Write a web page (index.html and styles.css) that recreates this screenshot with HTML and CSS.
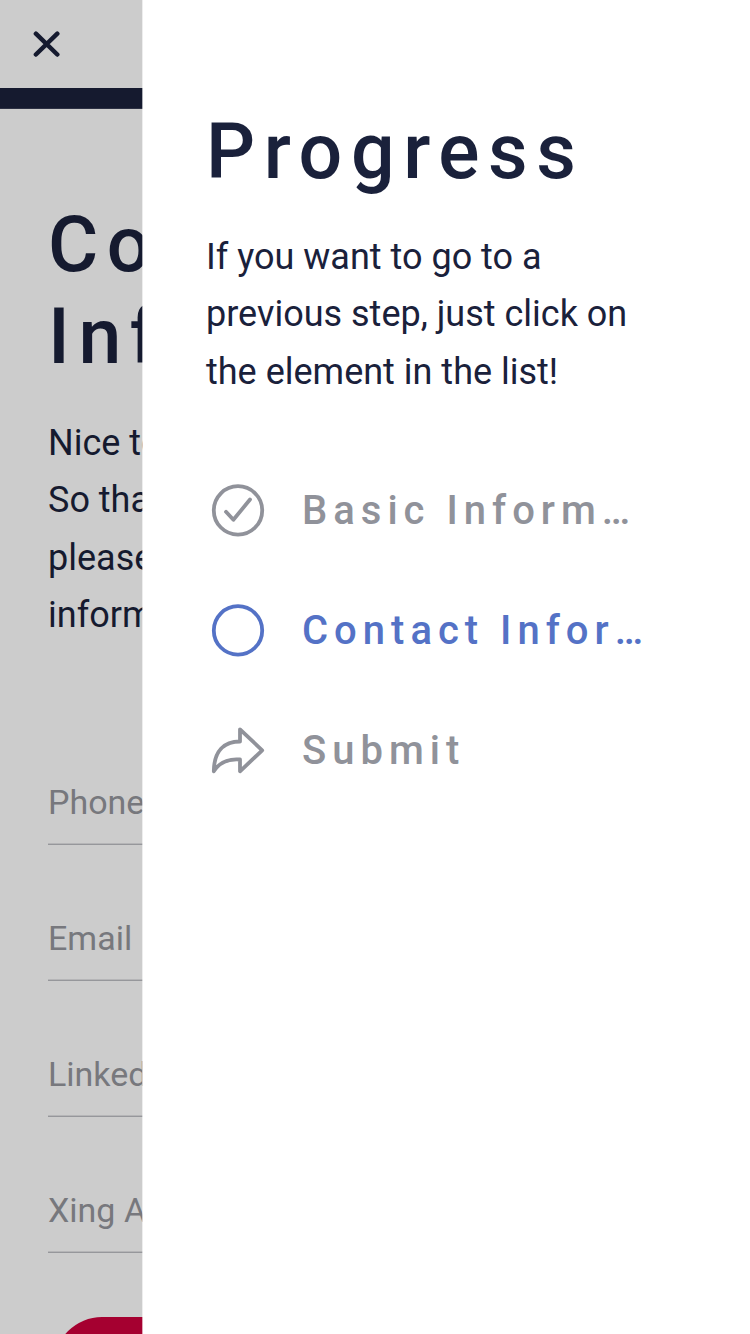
FILE: index.html
```html
<!DOCTYPE html>
<html lang="en">
<head>
<meta charset="utf-8">
<title>Progress</title>
<link rel="stylesheet" href="styles.css">
</head>
<body>
<div class="app">
  <main class="page">
    <header class="topbar">
      <svg class="close" viewBox="0 0 28 28"><path d="M3.9 3.7 L25.3 24.5 M25.3 3.7 L3.9 24.5"/></svg>
    </header>
    <div class="bar"></div>
    <section class="content">
      <h1 class="title">Co<br>Inf</h1>
      <p class="intro">Nice to<br>So that<br>please<br>inform</p>
      <div class="field">Phone</div>
      <div class="field">Email</div>
      <div class="field">LinkedIn</div>
      <div class="field">Xing Account</div>
      <div class="button"></div>
    </section>
  </main>
  <aside class="drawer">
    <h2 class="title">Progress</h2>
    <p class="intro">If you want to go to a<br>previous step, just click on<br>the element in the list!</p>
    <ul class="steps">
      <li class="step"><svg class="icon" viewBox="0 0 56 56"><circle cx="28" cy="28.4" r="24.2"/><path d="M16 29.8 L23.4 37.8 L40 17.5"/></svg><span class="label">Basic Information</span></li>
      <li class="step active"><svg class="icon" viewBox="0 0 56 56"><circle cx="28" cy="28.4" r="24.2"/></svg><span class="label">Contact Information</span></li>
      <li class="step"><svg class="icon" viewBox="0 0 56 56"><path d="M30 7.3 L52.2 28.3 L30 49.3 V37.5 C18 36.5 9 41 3.8 49.3 C4 29 14 19.5 30 19.5 Z"/></svg><span class="label">Submit</span></li>
    </ul>
  </aside>
</div>
</body>
</html>
```
FILE: styles.css
```css
* { box-sizing: border-box; }
body { margin: 0; font-family: Roboto, sans-serif; color: #1a213b; }
.app { display: flex; width: 750px; height: 1334px; overflow: hidden; background: #fff; }
.page { width: 143px; flex: none; overflow: hidden; background: #ccc; color: #151a2f; }
.topbar { height: 88px; padding: 30px 0 0 32px; }
.close { display: block; width: 28px; height: 28px; fill: none; stroke: #151a2f; stroke-width: 4.5; stroke-linecap: round; }
.bar { height: 21px; background: #151a2f; border-bottom: 1px solid #2d3144; }
.content { width: 600px; padding: 90px 0 0 48px; }
.title { margin: 0; font-size: 77px; line-height: 92px; font-weight: 500; letter-spacing: 8.6px; }
.intro { margin: 0; font-size: 36px; line-height: 57.6px; }
.page .intro { margin: 31.55px 0 115.45px; }
.field { height: 85px; margin-bottom: 51px; padding-top: 22px; border-bottom: 1px solid #96979b; box-shadow: inset 0 -1px #b5b5b7; font-size: 34px; line-height: 40px; color: #77787d; }
.button { width: 500px; height: 96px; margin: 64px 0 0 6px; border-radius: 48px; background: #a50030; }
.drawer { position: relative; flex: 1; margin-left: -1px; padding: 106px 64px 0 63px; border-left: 1px solid rgba(255, 255, 255, .65); background: #fff padding-box; }
.drawer .intro { margin-top: 30.55px; }
.steps { list-style: none; margin: 48.95px 0 0; padding: 0; }
.step { display: flex; align-items: center; height: 120px; color: #90929a; }
.active { color: #5472c6; }
.icon { flex: none; width: 56px; height: 56px; margin: 0 36px 0 4px; fill: none; stroke: currentColor; stroke-width: 3.8; stroke-linecap: round; stroke-linejoin: round; }
.label { width: 344px; padding-top: 1px; overflow: hidden; white-space: nowrap; text-overflow: ellipsis; font-size: 40px; font-weight: 500; letter-spacing: 6px; }
```
